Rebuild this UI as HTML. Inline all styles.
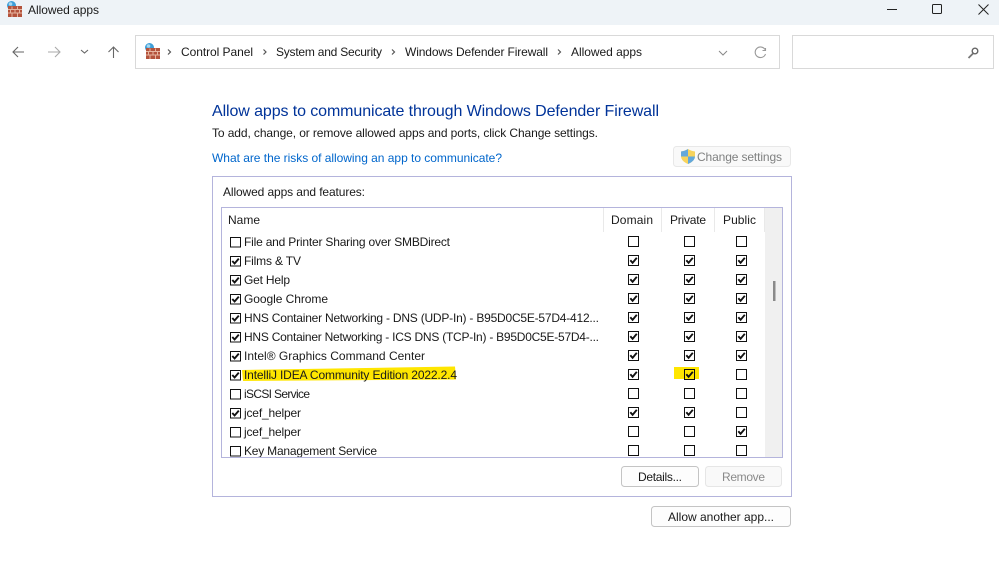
<!DOCTYPE html>
<html><head><meta charset="utf-8"><style>
html,body{margin:0;padding:0;background:#fff;width:999px;height:569px;overflow:hidden}
svg{display:block}
text{font-family:"Liberation Sans",sans-serif;font-size:12px;fill:#1a1a1a}
</style></head><body>
<svg width="999" height="569" viewBox="0 0 999 569" xmlns="http://www.w3.org/2000/svg">
<defs>
<g id="u"><rect x=".5" y=".5" width="10" height="10" fill="#fff" stroke="#111"/></g>
<g id="c"><rect x=".5" y=".5" width="10" height="10" fill="none" stroke="#111"/><path d="M2.3 5.2L4.6 7.8L8.8 2.8" fill="none" stroke="#111" stroke-width="1.9"/></g>
<g id="lu"><rect x=".5" y=".5" width="10" height="9.5" fill="#fff" stroke="#111"/></g>
<g id="lc"><rect x=".5" y=".5" width="10" height="9.5" fill="none" stroke="#111"/><path d="M2.3 5L4.6 7.5L8.8 2.6" fill="none" stroke="#111" stroke-width="1.9"/></g>
<g id="fw">
<circle cx="4.5" cy="4.5" r="4.5" fill="#3f9fd8"/><circle cx="3.5" cy="3" r="1.8" fill="#a4d8f2"/>
<rect x="1" y="5" width="14" height="11" fill="#b4533c"/>
<path d="M1 8.5H15M1 12H15M5 5.5V8.5M10.5 5.5V8.5M3.5 8.5V12M8 8.5V12M12.5 8.5V12M5 12V16M10.5 12V16" stroke="#e6b5a0" stroke-width="1" fill="none"/>
</g>
</defs>

<rect x="0" y="0" width="999" height="25" fill="#eef3f7"/>
<use href="#fw" x="7" y="1"/>
<text x="28" y="14" textLength="71" lengthAdjust="spacing">Allowed apps</text>
<path d="M887 9.5H897" stroke="#222" fill="none"/>
<rect x="932.5" y="4.5" width="9" height="9" rx="1" fill="none" stroke="#222"/>
<path d="M978.5 4.5L988.5 14.5M988.5 4.5L978.5 14.5" stroke="#222" fill="none"/>

<path d="M24 52H13M18 47L13 52L18 57" stroke="#666" fill="none" stroke-width="1.1"/>
<path d="M48 52H60M55 47L60 52L55 57" stroke="#aaa" fill="none" stroke-width="1.1"/>
<path d="M81 50L84.5 53L88 50" stroke="#666" fill="none" stroke-width="1.1"/>
<path d="M113.5 58V47M108.5 52L113.5 47L118.5 52" stroke="#666" fill="none" stroke-width="1.1"/>

<rect x="135.5" y="35.5" width="644" height="33" fill="#fff" stroke="#d9d9d9"/>
<use href="#fw" x="145" y="43"/>
<path d="M168 49.5L170.5 52L168 54.5" stroke="#555" fill="none" stroke-width="1.2"/>
<text x="181" y="56" textLength="72" lengthAdjust="spacing">Control Panel</text>
<path d="M263.5 49.5L266 52L263.5 54.5" stroke="#555" fill="none" stroke-width="1.2"/>
<text x="276" y="56" textLength="106" lengthAdjust="spacing">System and Security</text>
<path d="M392 49.5L394.5 52L392 54.5" stroke="#555" fill="none" stroke-width="1.2"/>
<text x="405" y="56" textLength="143" lengthAdjust="spacing">Windows Defender Firewall</text>
<path d="M558 49.5L560.5 52L558 54.5" stroke="#555" fill="none" stroke-width="1.2"/>
<text x="571" y="56" textLength="71" lengthAdjust="spacing">Allowed apps</text>
<path d="M719 51L723 55L727 51" stroke="#888" fill="none"/>
<path d="M765 49.5A5.3 5.3 0 1 0 765.5 54M765.5 48V50.5H762.5" stroke="#999" fill="none" stroke-width="1.1"/>

<rect x="792.5" y="35.5" width="201" height="33" fill="#fff" stroke="#d9d9d9"/>
<circle cx="975" cy="51" r="2.8" fill="none" stroke="#666" stroke-width="1.4"/>
<path d="M973 53.5L968.5 58" stroke="#777" stroke-width="1.8" fill="none"/>

<text x="212" y="116" style="font-size:16px;fill:#003399" textLength="447" lengthAdjust="spacing">Allow apps to communicate through Windows Defender Firewall</text>
<text x="212" y="137" textLength="386" lengthAdjust="spacing">To add, change, or remove allowed apps and ports, click Change settings.</text>
<text x="212" y="162" style="fill:#0066cc" textLength="290" lengthAdjust="spacing">What are the risks of allowing an app to communicate?</text>

<rect x="673.5" y="146.5" width="117" height="20" rx="3" fill="#f9f9f9" stroke="#e8e8e8"/>
<path d="M681 151.5Q685 151 688 149Q691 151 695 151.5V156Q695 161 688 164Q681 161 681 156Z" fill="#f7d35c"/>
<path d="M688 149Q685 151 681 151.5V156.5H688ZM688 156.5V164Q695 161 695 156.5Z" fill="#62a8dc"/>
<text x="697" y="161" style="fill:#7f8080" textLength="85" lengthAdjust="spacing">Change settings</text>

<rect x="212.5" y="176.5" width="579" height="320" fill="#fff" stroke="#b4b4dc"/>
<text x="223" y="196" textLength="142" lengthAdjust="spacing">Allowed apps and features:</text>

<svg x="222" y="208" width="560" height="249" viewBox="222 208 560 249">
<rect x="765" y="208" width="17" height="249" fill="#f0f0f0"/>
<rect x="773" y="281" width="2.5" height="20" fill="#8a8a8a"/>
<path d="M603.5 208V232M661.5 208V232M714.5 208V232M764.5 208V232" stroke="#e9e9e9" fill="none"/>
<text x="228" y="224" textLength="32" lengthAdjust="spacing">Name</text>
<text x="611" y="224" textLength="42" lengthAdjust="spacing">Domain</text>
<text x="670" y="224" textLength="36" lengthAdjust="spacing">Private</text>
<text x="723" y="224" textLength="33" lengthAdjust="spacing">Public</text>

<path d="M242 370L455 366.5L456 379.5L243 381Z" fill="#ffe600"/>
<rect x="674" y="367" width="25" height="12" fill="#ffe600"/>

<text x="244" y="246" textLength="206" lengthAdjust="spacing">File and Printer Sharing over SMBDirect</text>
<text x="244" y="265" textLength="57" lengthAdjust="spacing">Films &amp; TV</text>
<text x="244" y="284" textLength="46" lengthAdjust="spacing">Get Help</text>
<text x="244" y="303" textLength="84" lengthAdjust="spacing">Google Chrome</text>
<text x="244" y="322" textLength="355" lengthAdjust="spacing">HNS Container Networking - DNS (UDP-In) - B95D0C5E-57D4-412...</text>
<text x="244" y="341" textLength="355" lengthAdjust="spacing">HNS Container Networking - ICS DNS (TCP-In) - B95D0C5E-57D4-...</text>
<text x="244" y="360" textLength="181" lengthAdjust="spacing">Intel® Graphics Command Center</text>
<text x="244" y="379" textLength="213" lengthAdjust="spacing">IntelliJ IDEA Community Edition 2022.2.4</text>
<text x="244" y="398" textLength="66" lengthAdjust="spacing">iSCSI Service</text>
<text x="244" y="417" textLength="57" lengthAdjust="spacing">jcef_helper</text>
<text x="244" y="436" textLength="57" lengthAdjust="spacing">jcef_helper</text>
<text x="244" y="455" textLength="133" lengthAdjust="spacing">Key Management Service</text>

<use href="#lu" x="230" y="237"/><use href="#u" x="628" y="236"/><use href="#u" x="684" y="236"/><use href="#u" x="736" y="236"/>
<use href="#lc" x="230" y="256"/><use href="#c" x="628" y="255"/><use href="#c" x="684" y="255"/><use href="#c" x="736" y="255"/>
<use href="#lc" x="230" y="275"/><use href="#c" x="628" y="274"/><use href="#c" x="684" y="274"/><use href="#c" x="736" y="274"/>
<use href="#lc" x="230" y="294"/><use href="#c" x="628" y="293"/><use href="#c" x="684" y="293"/><use href="#c" x="736" y="293"/>
<use href="#lc" x="230" y="313"/><use href="#c" x="628" y="312"/><use href="#c" x="684" y="312"/><use href="#c" x="736" y="312"/>
<use href="#lc" x="230" y="332"/><use href="#c" x="628" y="331"/><use href="#c" x="684" y="331"/><use href="#c" x="736" y="331"/>
<use href="#lc" x="230" y="351"/><use href="#c" x="628" y="350"/><use href="#c" x="684" y="350"/><use href="#c" x="736" y="350"/>
<use href="#lc" x="230" y="370"/><use href="#c" x="628" y="369"/><use href="#c" x="684" y="369"/><use href="#u" x="736" y="369"/>
<use href="#lu" x="230" y="389"/><use href="#u" x="628" y="388"/><use href="#u" x="684" y="388"/><use href="#u" x="736" y="388"/>
<use href="#lc" x="230" y="408"/><use href="#c" x="628" y="407"/><use href="#c" x="684" y="407"/><use href="#u" x="736" y="407"/>
<use href="#lu" x="230" y="427"/><use href="#u" x="628" y="426"/><use href="#u" x="684" y="426"/><use href="#c" x="736" y="426"/>
<use href="#lu" x="230" y="446"/><use href="#u" x="628" y="445"/><use href="#u" x="684" y="445"/><use href="#u" x="736" y="445"/>
</svg>
<rect x="221.5" y="207.5" width="561" height="250" fill="none" stroke="#b4b4dc"/>

<rect x="621.5" y="466.5" width="77" height="20" rx="3" fill="#fdfdfd" stroke="#c4c4c4"/>
<text x="638" y="481" textLength="44" lengthAdjust="spacing">Details...</text>
<rect x="705.5" y="466.5" width="76" height="20" rx="3" fill="#f9f9f9" stroke="#e6e6e6"/>
<text x="722" y="481" style="fill:#8a8a8a" textLength="43" lengthAdjust="spacing">Remove</text>
<rect x="651.5" y="506.5" width="139" height="20" rx="3" fill="#fdfdfd" stroke="#c4c4c4"/>
<text x="668" y="521" textLength="106" lengthAdjust="spacing">Allow another app...</text>
</svg>
</body></html>
